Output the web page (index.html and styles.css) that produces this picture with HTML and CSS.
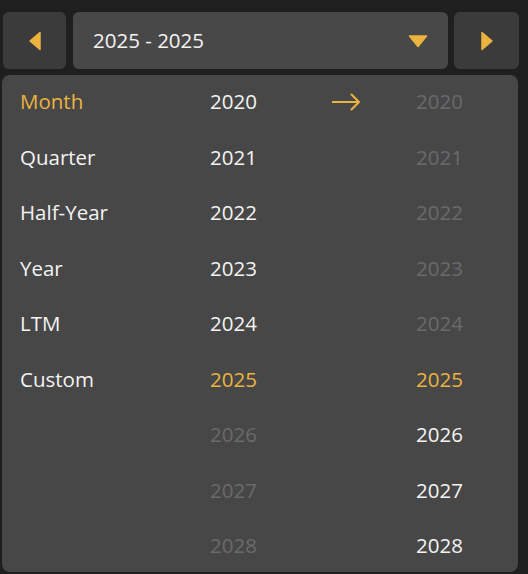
FILE: index.html
```html
<!DOCTYPE html>
<html>
<head>
<meta charset="utf-8">
<link rel="stylesheet" href="styles.css">
</head>
<body>
<div class="bar">
  <button class="nav nav-prev">
    <svg width="14" height="20" viewBox="0 0 14 20"><path d="M12 1.5 L12 18.5 L2 10 Z" fill="#ebb33f" stroke="#ebb33f" stroke-width="1.5" stroke-linejoin="round"/></svg>
  </button>
  <div class="select">
    <span class="select-text">2025 - 2025</span>
    <svg class="caret" width="20" height="14" viewBox="0 0 20 14"><path d="M1.5 2 L18.5 2 L10 12.5 Z" fill="#ebb33f" stroke="#ebb33f" stroke-width="1.5" stroke-linejoin="round"/></svg>
  </div>
  <button class="nav nav-next">
    <svg width="14" height="20" viewBox="0 0 14 20"><path d="M2 1.5 L2 18.5 L12 10 Z" fill="#ebb33f" stroke="#ebb33f" stroke-width="1.5" stroke-linejoin="round"/></svg>
  </button>
</div>
<div class="panel">
  <div class="col labels">
    <div class="cell gold">Month</div>
    <div class="cell">Quarter</div>
    <div class="cell">Half-Year</div>
    <div class="cell">Year</div>
    <div class="cell">LTM</div>
    <div class="cell">Custom</div>
  </div>
  <div class="col years">
    <div class="cell">2020</div>
    <div class="cell">2021</div>
    <div class="cell">2022</div>
    <div class="cell">2023</div>
    <div class="cell">2024</div>
    <div class="cell gold">2025</div>
    <div class="cell dim">2026</div>
    <div class="cell dim">2027</div>
    <div class="cell dim">2028</div>
  </div>
  <div class="col arrow-col">
    <div class="cell">
      <svg width="30" height="18" viewBox="0 0 30 18"><path d="M0 9 H27 M19.5 1.5 L27 9 L19.5 16.5" fill="none" stroke="#ebb33f" stroke-width="2" stroke-linecap="round" stroke-linejoin="round"/></svg>
    </div>
  </div>
  <div class="col years">
    <div class="cell dim">2020</div>
    <div class="cell dim">2021</div>
    <div class="cell dim">2022</div>
    <div class="cell dim">2023</div>
    <div class="cell dim">2024</div>
    <div class="cell gold">2025</div>
    <div class="cell">2026</div>
    <div class="cell">2027</div>
    <div class="cell">2028</div>
  </div>
</div>
</body>
</html>
```
FILE: styles.css
```css
html, body {
  margin: 0;
  padding: 0;
  background: #1f1f1f;
  height: 574px;
  overflow: hidden;
  font-family: "Open Sans", "Liberation Sans", sans-serif;
  color: #f3f3f3;
}
.bar {
  display: flex;
  gap: 6px;
  padding: 12px 9px 0 3px;
  height: 57px;
}
.nav {
  width: 65px;
  height: 57px;
  border: none;
  border-radius: 6px;
  background: #3b3b3b;
  display: flex;
  align-items: center;
  justify-content: center;
  padding: 0;
}
.nav-prev { width: 63px; margin-right: 1px; }
.select {
  flex: 1;
  background: #484848;
  border-radius: 6px;
  display: flex;
  align-items: center;
  padding: 0 20px 0 20px;
}
.select-text {
  font-size: 20.5px;
  flex: 1;
  padding-bottom: 2px;
}
.panel {
  margin: 6px 10px 0 2px;
  height: 497px;
  background: #474747;
  border-radius: 8px;
  overflow: hidden;
  display: grid;
  grid-template-columns: 208px 122px 84px 1fr;
}
.col { display: flex; flex-direction: column; }
.labels { padding-left: 18px; }
.cell {
  height: 55.5px;
  display: flex;
  align-items: center;
  font-size: 20.5px;
  color: #f3f3f3;
  padding-bottom: 3px;
  box-sizing: border-box;
}
.gold { color: #ebb33f; }
.dim { color: #6a6a6a; }
.arrow-col .cell { padding-bottom: 1px; }
```
